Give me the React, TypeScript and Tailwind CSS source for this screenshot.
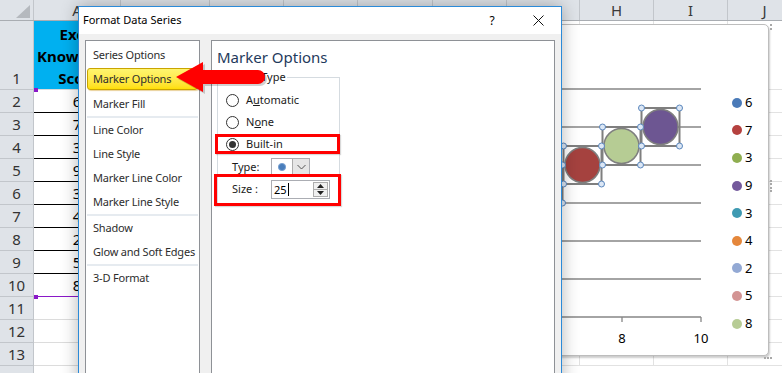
import React from 'react'

const COLS = [
  { l: 'A', w: 'w-[87px]' },
  { l: 'B', w: 'w-[89px]' },
  { l: 'C', w: 'w-[74px]' },
  { l: 'D', w: 'w-[74px]' },
  { l: 'E', w: 'w-[75px]' },
  { l: 'F', w: 'w-[74px]' },
  { l: 'G', w: 'w-[73px]' },
  { l: 'H', w: 'w-[74px]' },
  { l: 'I', w: 'w-[74px]' },
  { l: 'J', w: 'w-[74px]' },
]

const VALUES = ['6', '7', '3', '9', '3', '4', '2', '5', '8']
const ROWS = [2, 3, 4, 5, 6, 7, 8, 9, 10, 11, 12, 13]

const NAV: (string | null)[] = [
  'Series Options',
  'Marker Options',
  'Marker Fill',
  null,
  'Line Color',
  'Line Style',
  'Marker Line Color',
  'Marker Line Style',
  null,
  'Shadow',
  'Glow and Soft Edges',
  null,
  '3-D Format',
]

const LEGEND = [
  { v: '6', c: 'bg-[#4a7ab8]' },
  { v: '7', c: 'bg-[#b5413f]' },
  { v: '3', c: 'bg-[#8fae50]' },
  { v: '9', c: 'bg-[#74599c]' },
  { v: '3', c: 'bg-[#3f9ab2]' },
  { v: '4', c: 'bg-[#e5873b]' },
  { v: '2', c: 'bg-[#93a9d4]' },
  { v: '5', c: 'bg-[#d39493]' },
  { v: '8', c: 'bg-[#b7cc95]' },
]

const BUBBLES = [
  { cx: 543.5, cy: 184, fill: '#4f81bd' },
  { cx: 582.5, cy: 165, fill: '#a5423f' },
  { cx: 621.5, cy: 146, fill: '#b6cc94' },
  { cx: 660.5, cy: 127, fill: '#6d5692' },
]

function SheetRow({ n, value }: { n: number; value?: string }) {
  const aBorder = n === 10 ? 'border-b-[#8a18c8]' : value ? 'border-b-black' : 'border-b-[#dcdcdc]'
  return (
    <div className="flex h-[23px]">
      <div className="flex w-[34px] shrink-0 items-center justify-center border-r border-b border-[#c2c6cb] bg-[#dfe3e8] text-[15px] text-[#333]">
        {n}
      </div>
      <div className={`flex w-[87px] shrink-0 items-center justify-center border-r border-b border-r-[#dcdcdc] ${aBorder} text-[15px] text-black`}>
        {value}
      </div>
      {COLS.slice(1).map((c) => (
        <div key={c.l} className={`${c.w} shrink-0 border-r border-b border-[#e2e2e2]`} />
      ))}
    </div>
  )
}

function Radio({ label, checked }: { label: React.ReactNode; checked?: boolean }) {
  return (
    <div className="flex h-[22px] items-center gap-[7px]">
      <div className="flex h-[13px] w-[13px] items-center justify-center rounded-full border border-[#333] bg-white">
        {checked && <div className="h-[7px] w-[7px] rounded-full bg-[#333]" />}
      </div>
      <span className="text-[11px] text-[#1a1a1a]">{label}</span>
    </div>
  )
}

export default function App() {
  return (
    <div className="relative h-[373px] w-[782px] overflow-hidden bg-white font-['Noto_Sans',sans-serif]">
      {/* spreadsheet */}
      <div className="flex flex-col">
        <div className="flex h-[21px] border-b border-[#a9adb2] bg-[#dfe3e8]">
          <div className="relative w-[34px] shrink-0 border-r border-[#c2c6cb]">
            <svg className="absolute left-0 top-0" width="34" height="20" viewBox="0 0 34 20">
              <polygon points="30,5 30,18 16,18" fill="#b5b9be" />
            </svg>
          </div>
          {COLS.map((c) => (
            <div key={c.l} className={`${c.w} flex shrink-0 items-center justify-center border-r border-[#c2c6cb] text-[15px] text-[#3a3a3a]`}>
              {c.l}
            </div>
          ))}
        </div>
        <div className="flex h-[69px]">
          <div className="flex w-[34px] shrink-0 items-end justify-center border-r border-b border-[#c2c6cb] bg-[#dfe3e8] text-[15px] leading-[22px] text-[#333]">
            1
          </div>
          <div className="flex w-[87px] shrink-0 flex-col items-center justify-end overflow-hidden border-r border-b border-[#dcdcdc] bg-[#00b0f0] pl-[3px] text-[15px] font-bold leading-[22px] text-black">
            <span>Excel</span>
            <span>Knowledge</span>
            <span>Score</span>
          </div>
          {COLS.slice(1).map((c) => (
            <div key={c.l} className={`${c.w} shrink-0 border-r border-b border-[#e2e2e2]`} />
          ))}
        </div>
        {ROWS.map((n) => (
          <SheetRow key={n} n={n} value={VALUES[n - 2]} />
        ))}
        <div className="flex h-[23px]">
          <div className="w-[34px] shrink-0 border-r border-[#c2c6cb] bg-[#dfe3e8]" />
        </div>
      </div>

      {/* range marks */}
      <div className="absolute left-[34px] top-[88px] h-[4px] w-[4px] bg-[#8a18c8]" />
      <div className="absolute left-[34px] top-[295px] h-[4px] w-[4px] bg-[#8a18c8]" />

      {/* chart */}
      <div className="absolute left-[470px] top-[24px] h-[332px] w-[299px] rounded-[5px] border border-[#bdbdbd] bg-white shadow-[1px_2px_2px_rgba(0,0,0,0.2)]">
        <svg className="absolute left-[-1px] top-[-1px] font-['Noto_Sans',sans-serif]" width="299" height="332" viewBox="470 24 299 332">
          {[89, 127, 165, 203, 241, 279, 317].map((y) => (
            <line key={y} x1={470} x2={701} y1={y} y2={y} stroke="#868686" strokeWidth={1.3} />
          ))}
          <line x1={622} x2={622} y1={317} y2={322} stroke="#868686" strokeWidth={1.3} />
          <line x1={701} x2={701} y1={317} y2={322} stroke="#868686" strokeWidth={1.3} />
          <text x={622} y={343} textAnchor="middle" fontSize={13} fill="#000">8</text>
          <text x={701} y={343} textAnchor="middle" fontSize={13} fill="#000">10</text>
          {BUBBLES.map((b) => (
            <rect key={'s' + b.cx} x={b.cx - 19} y={b.cy - 19} width={38} height={38} fill="none" stroke="#7f7f7f" strokeWidth={2} />
          ))}
          {BUBBLES.map((b) => (
            <circle key={'c' + b.cx} cx={b.cx} cy={b.cy} r={17.5} fill={b.fill} stroke="#7f7f7f" strokeWidth={1.5} />
          ))}
          {BUBBLES.map((b) =>
            [
              [b.cx - 19, b.cy - 19],
              [b.cx + 19, b.cy - 19],
              [b.cx - 19, b.cy + 19],
              [b.cx + 19, b.cy + 19],
            ].map(([x, y]) => (
              <circle key={`h${b.cx}-${x}-${y}`} cx={x} cy={y} r={3} fill="#dce7f5" stroke="#5a86bc" strokeWidth={1} />
            ))
          )}
        </svg>
        <div className="absolute left-[261px] top-[64px] flex flex-col">
          {LEGEND.map((l, i) => (
            <div key={i} className="flex h-[27.6px] items-center gap-[3px]">
              <div className={`h-[10px] w-[10px] rounded-full ${l.c}`} />
              <span className="text-[13px] leading-none text-black">{l.v}</span>
            </div>
          ))}
        </div>
      </div>
      {/* chart grips */}
      <div className="absolute left-[770px] top-[24px] h-[6px] w-[2px] border-l-2 border-dotted border-[#a8a8a8]" />
      <div className="absolute left-[770px] top-[180px] h-[12px] w-[2px] border-l-2 border-dotted border-[#a8a8a8]" />
      <div className="absolute left-[764px] top-[357px] h-[2px] w-[8px] border-t-2 border-dotted border-[#a8a8a8]" />

      {/* dialog */}
      <div className="absolute left-[78px] top-[6px] flex h-[400px] w-[484px] flex-col border border-[#2b8ad8] bg-[#f0f0f0] shadow-[0_0_16px_rgba(0,0,0,0.3)]">
        <div className="flex h-[27px] items-center bg-white pl-[4px]">
          <span className="flex-1 text-[11px] text-black">Format Data Series</span>
          <div className="flex w-[46px] items-center justify-center text-[12px] text-black">?</div>
          <div className="flex w-[46px] items-center justify-center">
            <svg width="11" height="11" viewBox="0 0 11 11">
              <path d="M0.5 0.5 L10.5 10.5 M10.5 0.5 L0.5 10.5" stroke="#111" strokeWidth="1" />
            </svg>
          </div>
        </div>
        <div className="flex flex-1 gap-[11px] px-[6px] pt-[6px]">
          {/* nav */}
          <div className="flex w-[115px] shrink-0 flex-col border border-[#8e9196] bg-white pt-[2px]">
            {NAV.map((item, i) => {
              if (item === null) return <div key={i} className="mx-[1px] h-[2px] bg-[#e6ebf0]" />
              if (item === 'Marker Options')
                return (
                  <div key={i} className="h-[25px] px-[1px] pt-[1px] pb-[2px]">
                    <div className="flex h-full items-center rounded-[3px] border border-[#c9a400] bg-gradient-to-b from-[#fff56e] to-[#ffdf00] pl-[5px] text-[11px] tracking-[-0.2px] text-[#2d2d2d] shadow-[1px_1px_1px_rgba(200,140,0,0.4)]">
                      {item}
                    </div>
                  </div>
                )
              return (
                <div key={i} className="flex h-[24px] items-center pl-[7px] text-[11px] tracking-[-0.2px] text-[#2d2d2d]">
                  {item}
                </div>
              )
            })}
          </div>
          {/* content */}
          <div className="flex-1 border border-[#8e9196] bg-white pl-[5px] pt-[6px]">
            <div className="text-[15px] leading-[20px] text-[#1f3a5c]">Marker Options</div>
            <div className="relative mt-[10px] w-[123px] border border-[#d5dbe0] pl-[8px] pt-[11px] pb-[6px]">
              <span className="absolute left-[2px] top-[-9px] bg-white px-[1px] text-[11px] text-[#1a1a1a]">Marker Type</span>
              <Radio label={<>A<u>u</u>tomatic</>} />
              <Radio label={<>N<u>o</u>ne</>} />
              <Radio label="Built-in" checked />
              <div className="flex h-[24px] items-center">
                <span className="ml-[6px] w-[39px] text-[11px] text-[#1a1a1a]">Type:</span>
                <div className="flex h-[19px] w-[39px] border border-[#abadb3] bg-white">
                  <div className="flex w-[20px] items-center justify-center">
                    <svg width="10" height="10" viewBox="0 0 10 10">
                      <circle cx="5" cy="5" r="3.6" fill="#4a7ebb" stroke="#7aa2d2" strokeWidth="1" />
                    </svg>
                  </div>
                  <div className="flex flex-1 items-center justify-center border-l border-[#acacac] bg-[#e6e6e6]">
                    <svg width="9" height="6" viewBox="0 0 9 6">
                      <path d="M0.5 1 L4.5 5 L8.5 1" fill="none" stroke="#555" strokeWidth="1" />
                    </svg>
                  </div>
                </div>
              </div>
              <div className="flex h-[20px] items-center">
                <span className="ml-[6px] w-[39px] text-[11px] text-[#1a1a1a]">Size :</span>
                <div className="flex h-[19px] w-[59px] items-center border border-[#abadb3] bg-white pl-[2px]">
                  <span className="text-[11px] leading-none text-black">25</span>
                  <div className="ml-[1px] h-[13px] w-px bg-black" />
                  <div className="ml-auto mr-[1px] flex h-[15px] w-[15px] flex-col border border-[#adadad]">
                    <div className="flex flex-1 items-center justify-center border-b border-[#adadad] bg-[#f0f0f0]">
                      <svg width="7" height="4" viewBox="0 0 7 4">
                        <polygon points="3.5,0 7,4 0,4" fill="#222" />
                      </svg>
                    </div>
                    <div className="flex flex-1 items-center justify-center bg-[#f0f0f0]">
                      <svg width="7" height="4" viewBox="0 0 7 4">
                        <polygon points="0,0 7,0 3.5,4" fill="#222" />
                      </svg>
                    </div>
                  </div>
                </div>
              </div>
            </div>
          </div>
        </div>
      </div>

      {/* annotations */}
      <div className="absolute left-[215px] top-[134px] h-[20px] w-[125px] border-[3px] border-[#ff0000] shadow-[1px_1px_1px_rgba(0,0,0,0.15)]" />
      <div className="absolute left-[214px] top-[174px] h-[32px] w-[127px] border-[3px] border-[#ff0000] shadow-[1px_1px_1px_rgba(0,0,0,0.15)]" />
      <svg className="absolute left-[170px] top-[56px]" width="100" height="42" viewBox="170 56 100 42">
        <path d="M178 79 L205 64 L205 72 L260 72 A7 7 0 0 1 260 86 L205 86 L205 94 Z" fill="rgba(0,0,0,0.18)" />
        <path d="M176 77 L203 62 L203 70 L258 70 A7 7 0 0 1 258 84 L203 84 L203 92 Z" fill="#ff0000" />
      </svg>
    </div>
  )
}
